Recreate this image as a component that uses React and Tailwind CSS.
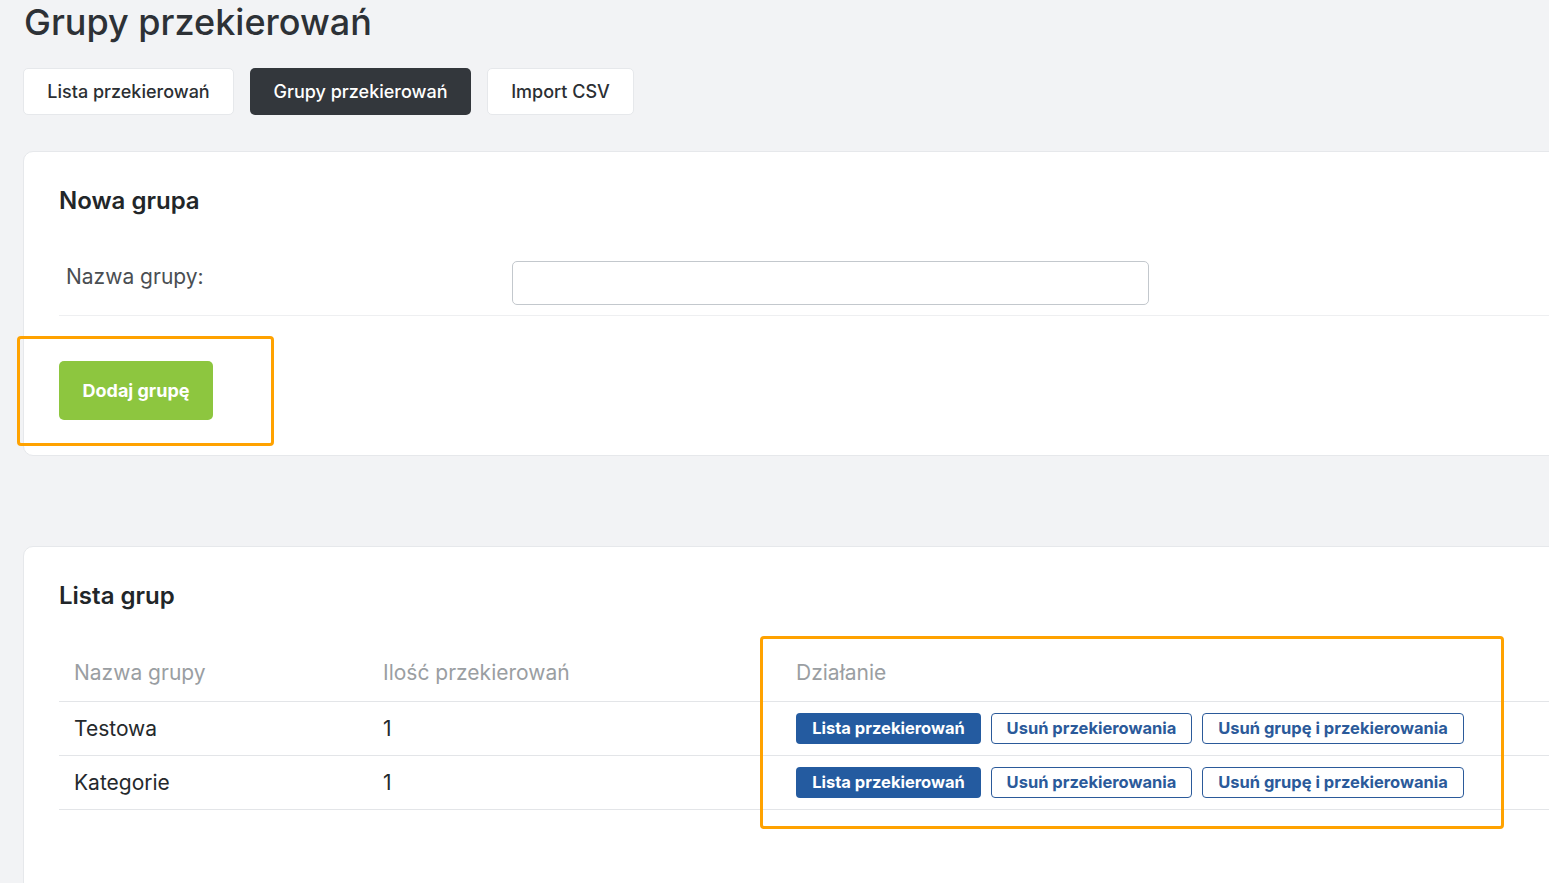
import React from 'react';

const rows = [
  { name: 'Testowa', count: 1 },
  { name: 'Kategorie', count: 1 },
];

function Tabs() {
  return (
    <div className="mt-[24px] flex gap-4">
      <button className="h-[47px] w-[211px] rounded-[5px] border border-[#e6e8eb] bg-white text-[18px] font-medium text-[#2b2f33]">
        Lista przekierowań
      </button>
      <button className="h-[47px] w-[221px] rounded-[5px] bg-[#33373c] text-[18px] font-medium text-white">
        Grupy przekierowań
      </button>
      <button className="h-[47px] w-[147px] rounded-[5px] border border-[#e6e8eb] bg-white text-[18px] font-medium text-[#2b2f33]">
        Import CSV
      </button>
    </div>
  );
}

function NewGroup() {
  return (
    <div className="mt-[36px] w-[1580px] rounded-l-[10px] border border-[#e6e8eb] bg-white pl-[35px] pt-9 pb-[35px]">
      <h2 className="text-[24px] leading-[26px] font-semibold text-[#222629]">Nowa grupa</h2>
      <div className="mt-[37px] flex items-start border-b border-[#eeeff1] py-[10px]">
        <label className="mt-[1px] w-[453px] pl-[7px] text-[21px] leading-[30px] text-[#4a4e52]">Nazwa grupy:</label>
        <input className="h-[44px] w-[637px] rounded-[5px] border border-[#c3c8cd] bg-white outline-none" />
      </div>
      <button className="mt-[45px] h-[59px] w-[154px] rounded-[5px] bg-[#8dc63f] text-[18px] font-bold text-white">
        Dodaj grupę
      </button>
    </div>
  );
}

function GroupList() {
  return (
    <div className="mt-[90px] h-[400px] w-[1580px] rounded-l-[10px] border border-[#e6e8eb] bg-white pl-[35px] pt-9">
      <h2 className="text-[24px] leading-[26px] font-semibold text-[#222629]">Lista grup</h2>
      <div className="mt-[36px] text-[21px]">
        <div className="flex h-[57px] items-center border-b border-[#e3e5e8] text-[#9a9ea2]">
          <div className="w-[309px] pl-[15px]">Nazwa grupy</div>
          <div className="w-[413px] pl-[15px]">Ilość przekierowań</div>
          <div className="pl-[15px]">Działanie</div>
        </div>
        {rows.map((r) => (
          <div key={r.name} className="flex h-[54px] items-center border-b border-[#e3e5e8] text-[#25292c]">
            <div className="w-[309px] pl-[15px]">{r.name}</div>
            <div className="w-[413px] pl-[15px]">{r.count}</div>
            <div className="flex gap-[10px] pl-[15px] text-[16.5px] font-bold">
              <button className="h-[31px] w-[185px] rounded-[4px] bg-[#245ba0] text-white">Lista przekierowań</button>
              <button className="h-[31px] w-[201px] rounded-[4px] border border-[#2b5a9a] bg-white text-[#2b5a9a]">Usuń przekierowania</button>
              <button className="h-[31px] w-[262px] rounded-[4px] border border-[#2b5a9a] bg-white text-[#2b5a9a]">Usuń grupę i przekierowania</button>
            </div>
          </div>
        ))}
      </div>
    </div>
  );
}

export default function App() {
  return (
    <div
      className="relative h-[883px] w-full overflow-hidden bg-[#f2f3f5] pl-[23px]"
      style={{ fontFamily: 'Inter, "Noto Sans", sans-serif' }}
    >
      <h1 className="pl-[1px] text-[36px] leading-[44px] font-medium text-[#2d3136]">Grupy przekierowań</h1>
      <Tabs />
      <NewGroup />
      <GroupList />

      {/* annotation highlights */}
      <div className="pointer-events-none absolute left-[17px] top-[336px] h-[110px] w-[257px] rounded-[4px] border-[3px] border-[#ffa200]" />
      <div className="pointer-events-none absolute left-[760px] top-[636px] h-[193px] w-[744px] rounded-[4px] border-[3px] border-[#ffa200]" />
    </div>
  );
}
